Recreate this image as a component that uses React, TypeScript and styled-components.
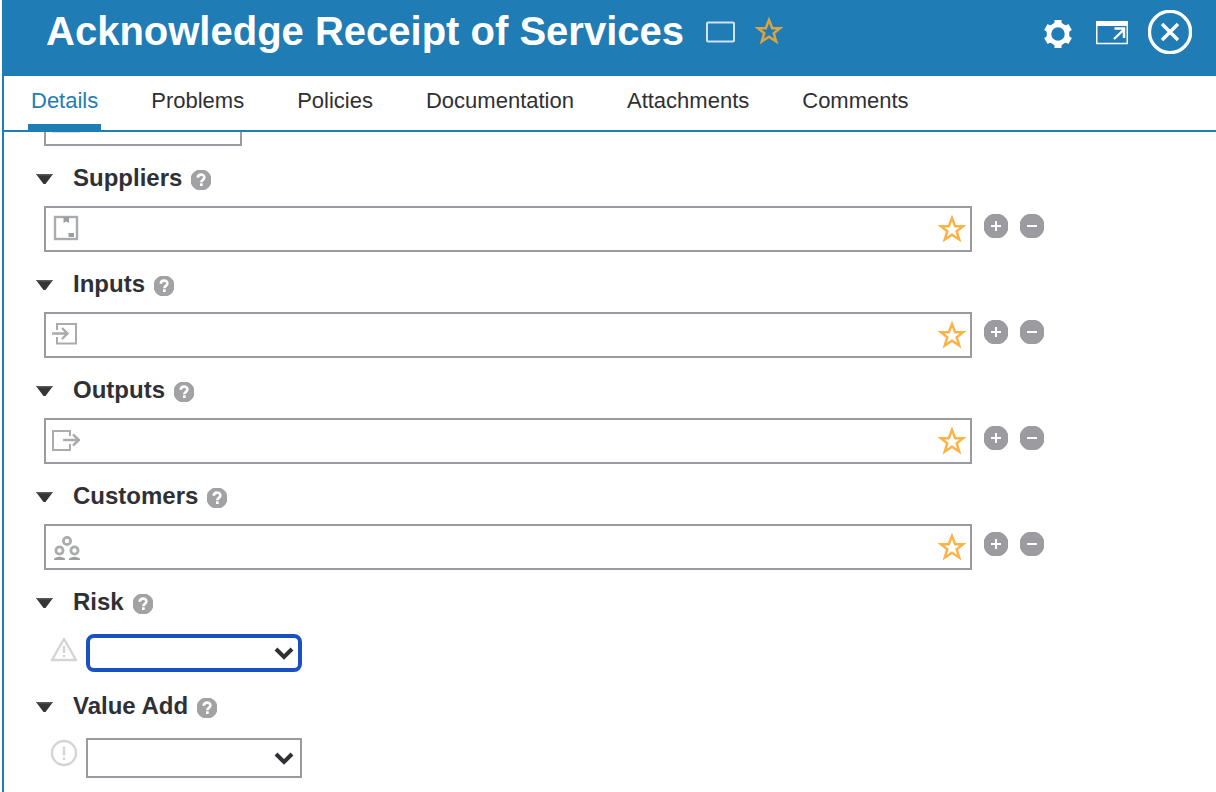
import React, { useId, useState } from "react";
import styled, { createGlobalStyle, css } from "styled-components";

const blue = "#1f7cb5";
const grey = "#9c9ca0";
const ink = "#2f3035";

const GlobalStyle = createGlobalStyle`
  * { box-sizing: border-box; }
  body {
    margin: 0;
    background: #fff;
    color: ${ink};
    font-family: "Helvetica Neue", "Liberation Sans", Arial, sans-serif;
  }
  button, input, select { font: inherit; color: inherit; }
`;

const Panel = styled.div`
  display: flex;
  flex-direction: column;
  min-height: 100vh;
  margin-left: 2px;
`;

const Header = styled.header`
  display: flex;
  align-items: center;
  justify-content: space-between;
  padding: 10px 24px 22px 44px;
  background: ${blue};
  color: #fff;
`;

const TitleGroup = styled.div`
  display: flex;
  align-items: center;
  height: 44px;
  padding-bottom: 2px;
`;

const Title = styled.h1`
  margin: 0 21px 0 0;
  font-size: 40px;
  line-height: 48px;
  font-weight: 700;
  white-space: nowrap;
`;

const Actions = styled.div`
  display: flex;
  align-items: center;
`;

const IconButton = styled.button<{ $gap?: number }>`
  display: flex;
  flex: none;
  align-items: center;
  justify-content: center;
  margin: 0 0 0 ${(p) => p.$gap ?? 0}px;
  padding: 0;
  border: 0;
  background: none;
  cursor: pointer;

  svg { display: block; }
`;

const Body = styled.div`
  display: flex;
  flex: 1;
  flex-direction: column;
  border-left: 2px solid ${blue};
`;

const Tabs = styled.nav`
  display: flex;
  gap: 47px;
  height: 56px;
  padding-left: 24px;
  border-bottom: 2px solid ${blue};
`;

const Tab = styled.a<{ $active?: boolean }>`
  padding: 12px 3px 0;
  border-bottom: 6px solid ${(p) => (p.$active ? blue : "transparent")};
  color: ${(p) => (p.$active ? blue : ink)};
  font-size: 22px;
  line-height: 26px;
  text-decoration: none;
  white-space: nowrap;
`;

const Form = styled.form`
  padding: 0 172px 14px 32px;
`;

const ScrolledField = styled.div`
  width: 198px;
  height: 14px;
  margin-left: 8px;
  padding-left: 6px;
  border: 2px solid ${grey};
  border-top: 0;

  &::before {
    content: "";
    display: block;
    width: 28px;
    height: 1px;
    background: #dcdcde;
  }
`;

const SectionHead = styled.div`
  display: flex;
  align-items: center;
  height: 60px;
  padding-top: 8px;
`;

const Label = styled.label`
  margin: 0 9px 0 20px;
  padding-bottom: 4px;
  font-size: 24px;
  line-height: 28px;
  font-weight: 700;
`;

const FieldRow = styled.div`
  display: flex;
  gap: 12px;
  padding-left: 8px;
`;

const Field = styled.div`
  display: flex;
  flex: 1;
  align-items: center;
  min-width: 0;
  height: 46px;
  padding: 0 4px 0 6px;
  border: 2px solid ${grey};

  svg { flex: none; }
`;

const TextInput = styled.input`
  flex: 1;
  min-width: 0;
  height: 40px;
  padding: 0 8px;
  border: 0;
  outline: 0;
  background: none;
  font-size: 22px;
`;

const RowButtons = styled.div`
  display: flex;
  align-items: flex-start;
  gap: 12px;
  padding-top: 8px;
`;

const SelectSection = styled.section`
  padding-top: 4px;
`;

const SelectRow = styled.div`
  display: flex;
  align-items: flex-start;
  gap: 8px;
  height: 40px;
  padding-left: 14px;
`;

const SelectHead = styled(SectionHead)`
  padding-top: 0;
`;

const SelectWrap = styled.div`
  position: relative;
  width: 216px;
`;

const Select = styled.select<{ $active?: boolean }>`
  display: block;
  width: 100%;
  height: 40px;
  padding: 0 36px 0 8px;
  border: 2px solid ${grey};
  border-radius: 0;
  outline: 0;
  background: #fff;
  appearance: none;
  font-size: 20px;

  ${(p) =>
    p.$active &&
    css`
      height: 38px;
      border: 4px solid #1b50c1;
      border-radius: 8px;
    `}
`;

const Chevron = styled.svg`
  position: absolute;
  top: calc(50% - 6px);
  right: 8px;
  pointer-events: none;
`;

const Toggle = () => (
  <IconButton type="button" aria-label="Collapse section">
    <svg width="17" height="14" viewBox="0 0 17 14">
      <path d="M0 1h17L9.500 11h-2z" fill="#353535" />
      <path d="M0 1h17l-1.500 1.600H1.500z" fill="#5a5a5a" />
    </svg>
  </IconButton>
);

const Help = () => (
  <IconButton type="button" aria-label="Help">
    <svg width="20" height="20" viewBox="0 0 20 20">
      <circle cx="10" cy="10" r="10.600" fill="#a2a2a5" />
      <path d="M6.800 7.800c0-4.200 6.600-4.200 6.600-.3 0 2.400-3.100 2.300-3.100 4.800" fill="none" stroke="#fff" strokeWidth="2.600" />
      <rect x="9" y="13.300" width="2.700" height="2.700" fill="#fff" />
    </svg>
  </IconButton>
);

const starPath = "M14 4l3.200 8.200h8l-6.500 5 2.500 8.300-7.200-4.800-7.200 4.800 2.500-8.300-6.500-5h8z";

const Star = ({ color }: { color: string }) => (
  <svg width="28" height="30" viewBox="0 0 28 30">
    <path d={starPath} fill="none" stroke={color} strokeWidth="2.500" />
  </svg>
);

const RoundIcon = ({ plus }: { plus?: boolean }) => (
  <svg width="24" height="24" viewBox="0 0 24 24">
    <circle cx="12" cy="12" r="12.600" fill={grey} />
    <path d={plus ? "M7 12h10M12 7v10" : "M7 12h10"} stroke="#fff" strokeWidth="2" />
  </svg>
);

const glyphs: Record<string, React.ReactNode> = {
  Suppliers: (
    <>
      <rect x="3" y="2" width="22" height="22" strokeWidth="2.400" />
      <path d="M11.500 2h5.500v6l-2.700-1.500-2.800 1.500z" fill="#9d9ea0" stroke="none" />
      <path d="M16.500 18h5.500v4h-5.500z" fill="#9d9ea0" stroke="none" />
    </>
  ),
  Inputs: (
    <>
      <path d="M5 9V3h19v19.500H5V16" />
      <path d="M0 12.500h15M10 7l5.500 5.500L10 18" strokeWidth="2.400" />
    </>
  ),
  Outputs: (
    <>
      <path d="M18 9V4H1v19h17v-6" />
      <path d="M11 13h16M21 7.500l6 5.500-6 5.500" strokeWidth="2.400" />
    </>
  ),
  Customers: (
    <>
      <circle cx="15" cy="8" r="3.600" strokeWidth="2.800" />
      <circle cx="7.500" cy="17.500" r="3.600" strokeWidth="2.800" />
      <circle cx="22.500" cy="17.500" r="3.600" strokeWidth="2.800" />
      <path d="M2 27v-1.500q5.500-3.500 11 0V27zM17 27v-1.500q5.500-3.500 11 0V27z" fill="#9d9ea0" stroke="none" />
    </>
  ),
};

const ListSection = ({ name }: { name: string }) => {
  const id = useId();
  return (
    <section>
      <SectionHead>
        <Toggle />
        <Label htmlFor={id}>{name}</Label>
        <Help />
      </SectionHead>
      <FieldRow>
        <Field>
          <svg width="28" height="28" viewBox="0 0 28 28" fill="none" stroke="#a9abac" strokeWidth="2">
            {glyphs[name]}
          </svg>
          <TextInput id={id} type="text" />
          <IconButton type="button" aria-label={`Favorite ${name}`}>
            <Star color="#f8b448" />
          </IconButton>
        </Field>
        <RowButtons>
          <IconButton type="button" aria-label={`Add to ${name}`}>
            <RoundIcon plus />
          </IconButton>
          <IconButton type="button" aria-label={`Remove from ${name}`}>
            <RoundIcon />
          </IconButton>
        </RowButtons>
      </FieldRow>
    </section>
  );
};

const ChoiceSection = ({ name, active, children }: { name: string; active?: boolean; children: React.ReactNode }) => {
  const id = useId();
  return (
    <SelectSection>
      <SelectHead>
        <Toggle />
        <Label htmlFor={id}>{name}</Label>
        <Help />
      </SelectHead>
      <SelectRow>
        <svg width="28" height="32" viewBox="0 0 28 32" fill="none" stroke="#d3d5d5" strokeWidth="2.400">
          {children}
        </svg>
        <SelectWrap>
          <Select id={id} $active={active} />
          <Chevron width="20" height="14" viewBox="0 0 20 14">
            <path d="M2 2l8 8 8-8" fill="none" stroke={ink} strokeWidth="4" />
          </Chevron>
        </SelectWrap>
      </SelectRow>
    </SelectSection>
  );
};

const tabs = ["Details", "Problems", "Policies", "Documentation", "Attachments", "Comments"];

export default function App() {
  const [current, setCurrent] = useState("Details");
  return (
    <Panel>
      <GlobalStyle />
      <Header>
        <TitleGroup>
          <Title>Acknowledge Receipt of Services</Title>
          <IconButton type="button" aria-label="Comment">
            <svg width="30" height="24" viewBox="0 0 30 24">
              <rect x="2" y="3.500" width="27" height="19" rx="1" fill="none" stroke="#cfe3f0" strokeWidth="2" />
            </svg>
          </IconButton>
          <IconButton type="button" aria-label="Favorite" $gap={20}>
            <Star color="#d9a441" />
          </IconButton>
        </TitleGroup>
        <Actions>
          <IconButton type="button" aria-label="Settings">
            <svg width="28" height="32" viewBox="0 0 28 32">
              <g transform="translate(14 18)" fill="#fff">
                <circle r="9" fill="none" stroke="#fff" strokeWidth="4.500" />
                {[0, 60, 120, 180, 240, 300].map((a) => (
                  <path key={a} d="M-5-9.500l1.500-2V-14h7v2.500l1.500 2z" transform={`rotate(${a})`} />
                ))}
              </g>
            </svg>
          </IconButton>
          <IconButton type="button" aria-label="Open in window" $gap={24}>
            <svg width="32" height="26" viewBox="0 0 32 26" fill="none" stroke="#fff">
              <path d="M0 2h32v5H0z" fill="#fff" stroke="none" />
              <rect x="0.750" y="3" width="30.500" height="21.500" strokeWidth="1.500" />
              <path d="M18 20l10-9.500M18.500 9.500H28V19" strokeWidth="2.400" />
            </svg>
          </IconButton>
          <IconButton type="button" aria-label="Close" $gap={20}>
            <svg width="44" height="44" viewBox="0 0 44 44" fill="none" stroke="#fff">
              <circle cx="22" cy="22" r="20.600" strokeWidth="3.400" />
              <path d="M14 14l16 16M30 14L14 30" strokeWidth="3.400" />
            </svg>
          </IconButton>
        </Actions>
      </Header>
      <Body>
        <Tabs>
          {tabs.map((t) => (
            <Tab key={t} href={`#${t.toLowerCase()}`} $active={t === current} onClick={() => setCurrent(t)}>
              {t}
            </Tab>
          ))}
        </Tabs>
        <Form>
          <ScrolledField />
          <ListSection name="Suppliers" />
          <ListSection name="Inputs" />
          <ListSection name="Outputs" />
          <ListSection name="Customers" />
          <ChoiceSection name="Risk" active>
            <path d="M14 5L26 26H2z" strokeLinejoin="round" />
            <path d="M14 12v7M14 21v2" />
          </ChoiceSection>
          <ChoiceSection name="Value Add">
            <circle cx="14" cy="15" r="12" />
            <path d="M14 8.500v9M14 19.500v2.500" />
          </ChoiceSection>
        </Form>
      </Body>
    </Panel>
  );
}
